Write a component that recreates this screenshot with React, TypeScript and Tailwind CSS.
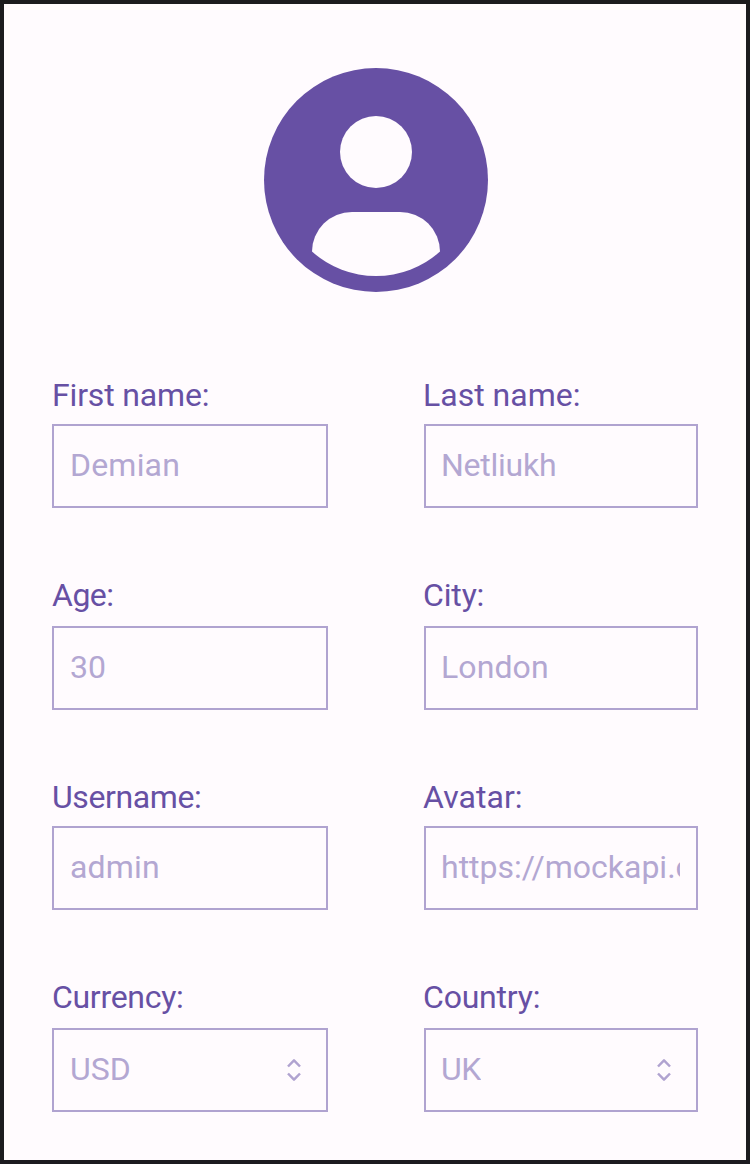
import React from "react";

type FieldProps = {
  label: string;
  value: string;
  select?: boolean;
  gap?: string;
  labelClass?: string;
  valueClass?: string;
};

function Chevrons() {
  return (
    <svg width="16" height="24" viewBox="0 0 16 24" fill="none" stroke="#b0a3d0" strokeWidth="2.5" strokeLinejoin="round" className="shrink-0">
      <path d="M2 8.5L8 2.3L14 8.5M2 15.5L8 21.7L14 15.5" />
    </svg>
  );
}

function Field({ label, value, select, gap = "mt-2.5", labelClass = "", valueClass = "" }: FieldProps) {
  return (
    <div className="flex flex-col">
      <label className={`${labelClass} h-[38px] whitespace-nowrap text-[32px] leading-[38px] text-[#6750a4]`}>{label}</label>
      <div className={`${gap} flex h-[84px] items-center justify-between border-2 border-[#b0a3d0] px-4 text-[32px] leading-[38px] text-[#b3a7d2]`}>
        <span className={`${valueClass} mb-0.5 overflow-hidden whitespace-nowrap`}>{value}</span>
        {select && <span className="mr-2 flex"><Chevrons /></span>}
      </div>
    </div>
  );
}

export default function App() {
  return (
    <main className="h-[1164px] w-[750px] overflow-hidden border-4 border-[#1c1b1f] bg-[#fffbfe] px-12 pt-16 font-['Roboto',sans-serif]">
      <svg width="224" height="224" viewBox="0 0 224 224" className="ml-[212px]">
        <circle cx="112" cy="112" r="112" fill="#6750a4" />
        <circle cx="112" cy="84" r="36" fill="#fffbfe" />
        <path d="M48 183.55A40 39.55 0 0 1 88 144H136A40 39.55 0 0 1 176 183.55A96 96 0 0 1 48 183.55Z" fill="#fffbfe" />
      </svg>
      <form className="mt-[84px] grid grid-cols-[276px_274px] grid-rows-[200px_202px_200px_140px] gap-x-24">
        <Field label="First name:" value="Demian" labelClass="tracking-[-0.15px]" valueClass="tracking-[0.2px]" />
        <Field label="Last name:" value="Netliukh" labelClass="-ml-px" valueClass="-ml-px tracking-[-0.25px]" />
        <Field label="Age:" value="30" gap="mt-3" labelClass="tracking-[-0.5px]" />
        <Field label="City:" value="London" gap="mt-3" labelClass="-ml-px tracking-[-0.15px]" valueClass="-ml-px tracking-[0.1px]" />
        <Field label="Username:" value="admin" labelClass="tracking-[-0.4px]" valueClass="tracking-[0.2px]" />
        <Field label="Avatar:" value="https://mockapi.com" labelClass="-ml-px tracking-[0.05px]" valueClass="-ml-px" />
        <Field label="Currency:" value="USD" gap="mt-3" select labelClass="tracking-[-0.3px]" />
        <Field label="Country:" value="UK" gap="mt-3" select labelClass="-ml-px tracking-[-0.2px]" valueClass="-ml-px tracking-[-0.5px]" />
      </form>
    </main>
  );
}
